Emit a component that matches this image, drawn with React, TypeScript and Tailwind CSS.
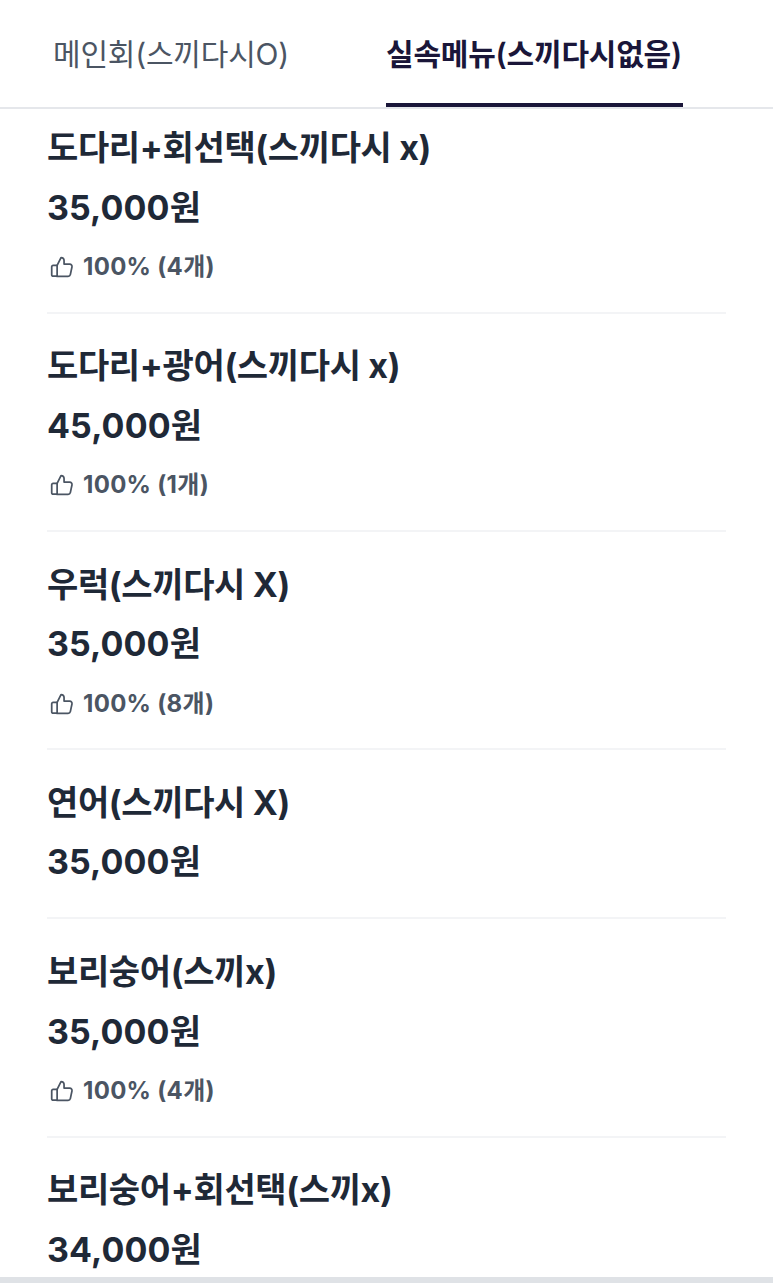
import React from "react";

const items = [
  { name: "도다리+회선택(스끼다시 x)", price: "35,000원", rating: "100% (4개)" },
  { name: "도다리+광어(스끼다시 x)", price: "45,000원", rating: "100% (1개)" },
  { name: "우럭(스끼다시 X)", price: "35,000원", rating: "100% (8개)" },
  { name: "연어(스끼다시 X)", price: "35,000원" },
  { name: "보리숭어(스끼x)", price: "35,000원", rating: "100% (4개)" },
  { name: "보리숭어+회선택(스끼x)", price: "34,000원" },
];

function Thumb() {
  return (
    <svg width="26" height="26" viewBox="0 0 24 24" fill="none" stroke="#4b5563" strokeWidth="1.6" strokeLinejoin="round" strokeLinecap="round" className="shrink-0">
      <path d="M7.5 10.5v10M3.8 10.5h3.7v10H3.8a1.3 1.3 0 0 1-1.3-1.3v-7.4a1.3 1.3 0 0 1 1.3-1.3Z" />
      <path d="M7.5 10.5l3.6-7.2c1.5 0 2.8 1.2 2.8 2.8v3.2h5.2a2.2 2.2 0 0 1 2.1 2.7l-1.5 7a2.2 2.2 0 0 1-2.1 1.7H7.5" />
    </svg>
  );
}

export default function App() {
  return (
    <div className="w-[773px] h-[1283px] overflow-hidden bg-white flex flex-col font-['Inter','Noto_Sans_CJK_KR',sans-serif]">
      <div className="h-[109px] shrink-0 flex border-b-2 border-[#e5e7eb] pl-[53px]">
        <div className="w-[333px] pt-[32px] text-[30px] leading-[44px] tracking-[-0.2px] text-[#4b5563] font-normal whitespace-nowrap">메인회(스끼다시O)</div>
        <div className="w-[297px] h-[107px] pt-[32px] text-[30px] leading-[44px] tracking-[-0.2px] text-[#1a1639] font-semibold border-b-4 border-[#1a1639] whitespace-nowrap">실속메뉴(스끼다시없음)</div>
      </div>
      <div className="flex-1 min-h-0 overflow-hidden">
        <div className="mx-[47px] w-[679px]">
          {items.map((it) => (
            <div key={it.name} className="border-b-2 border-[#f3f4f6] last:border-b-0 pb-[30px] [&+div]:pt-[27.75px] first:pt-[14px]">
              <div className="text-[34px] leading-[50px] tracking-[-0.35px] font-bold text-[#1f2937] whitespace-nowrap">{it.name}</div>
              <div className="mt-[9.5px] text-[34px] leading-[50px] tracking-[0.1px] font-bold text-[#1f2937] whitespace-nowrap">{it.price}</div>
              {it.rating && (
                <div className="mt-[20px] flex items-center gap-[8px] h-[29px] pl-[2px] text-[24px] tracking-[0.3px] font-bold text-[#4b5563]">
                  <Thumb />
                  <span>{it.rating}</span>
                </div>
              )}
            </div>
          ))}
        </div>
      </div>
      <div className="h-[6px] shrink-0 bg-[#dfe2e6]" />
    </div>
  );
}
